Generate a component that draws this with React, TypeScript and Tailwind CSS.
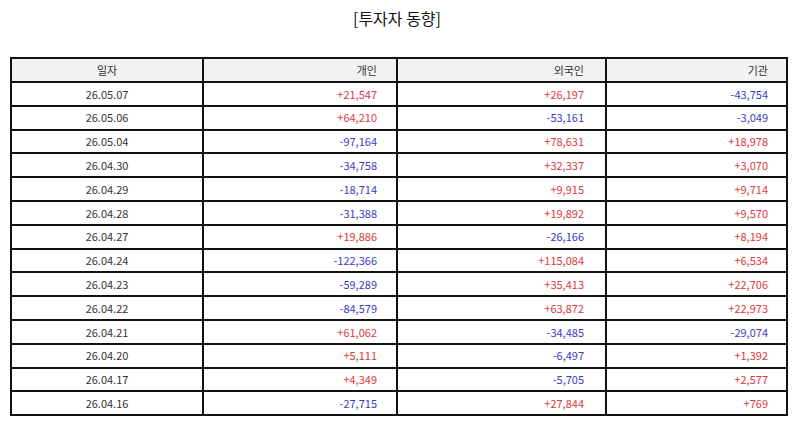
import React from "react";

const rows = [
  ["26.05.07", "+21,547", "+26,197", "-43,754"],
  ["26.05.06", "+64,210", "-53,161", "-3,049"],
  ["26.05.04", "-97,164", "+78,631", "+18,978"],
  ["26.04.30", "-34,758", "+32,337", "+3,070"],
  ["26.04.29", "-18,714", "+9,915", "+9,714"],
  ["26.04.28", "-31,388", "+19,892", "+9,570"],
  ["26.04.27", "+19,886", "-26,166", "+8,194"],
  ["26.04.24", "-122,366", "+115,084", "+6,534"],
  ["26.04.23", "-59,289", "+35,413", "+22,706"],
  ["26.04.22", "-84,579", "+63,872", "+22,973"],
  ["26.04.21", "+61,062", "-34,485", "-29,074"],
  ["26.04.20", "+5,111", "-6,497", "+1,392"],
  ["26.04.17", "+4,349", "-5,705", "+2,577"],
  ["26.04.16", "-27,715", "+27,844", "+769"],
];

const pads = ["pr-[19px]", "pr-[21px]", "pr-[18px]"];

function tone(v: string) {
  return v.startsWith("-") ? "text-[#3a3ac8]" : "text-[#e0383c]";
}

export default function App() {
  return (
    <div
      className="w-[794px] h-[425px] bg-white text-[#333]"
      style={{ fontFamily: '"Noto Sans CJK KR", "Noto Sans", sans-serif' }}
    >
      <div className="pt-[6px] text-center text-[16px] leading-[24px] text-[#111]">[투자자 동향]</div>
      <div className="pl-[10px] pt-[27px]">
        <table className="w-[776px] border-collapse border-2 border-[#111] text-[11px] table-fixed">
          <colgroup>
            <col className="w-[192px]" />
            <col className="w-[194px]" />
            <col className="w-[209px]" />
            <col className="w-[181px]" />
          </colgroup>
          <thead>
            <tr className="h-[24px] bg-[#f2f2f2]">
              <th className="border-2 border-[#111] font-normal text-center">일자</th>
              <th className={`border-2 border-[#111] font-normal text-right ${pads[0]}`}>개인</th>
              <th className={`border-2 border-[#111] font-normal text-right ${pads[1]}`}>외국인</th>
              <th className={`border-2 border-[#111] font-normal text-right ${pads[2]}`}>기관</th>
            </tr>
          </thead>
          <tbody>
            {rows.map((r) => (
              <tr key={r[0]} className="h-[23.8px]">
                <td className="border-2 border-[#111] text-center">{r[0]}</td>
                {r.slice(1).map((v, i) => (
                  <td key={i} className={`border-2 border-[#111] text-right ${pads[i]} ${tone(v)}`}>
                    {v}
                  </td>
                ))}
              </tr>
            ))}
          </tbody>
        </table>
      </div>
    </div>
  );
}
